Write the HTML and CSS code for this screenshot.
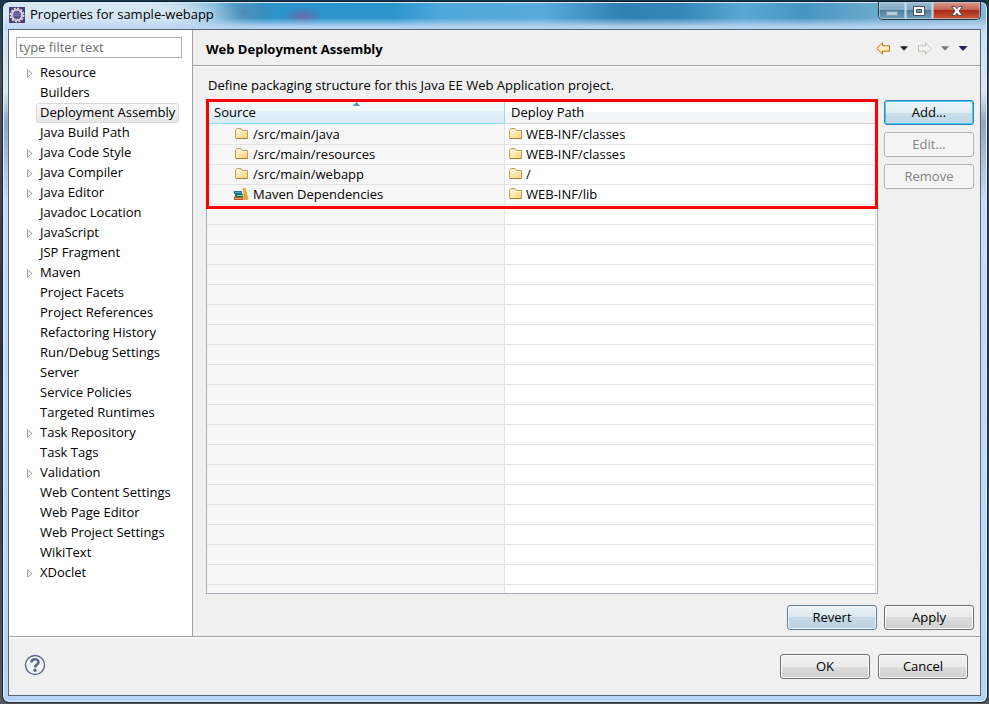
FILE: index.html
```html
<!DOCTYPE html>
<html lang="en">
<head>
<meta charset="utf-8">
<title>Properties for sample-webapp</title>
<link rel="stylesheet" href="styles.css">
</head>
<body>
<svg class="defs" aria-hidden="true">
  <defs>
    <linearGradient id="folderFill" x1="0" y1="0" x2="1" y2="1">
      <stop offset="0" stop-color="#fffbe8"/>
      <stop offset="1" stop-color="#fbd272"/>
    </linearGradient>
    <linearGradient id="backFill" x1="0" y1="0" x2="0" y2="1">
      <stop offset="0" stop-color="#fffef4"/>
      <stop offset="1" stop-color="#fbdf83"/>
    </linearGradient>
    <symbol id="folder" viewBox="0 0 14 12">
      <path d="M.5 10V2.500L2 .5h4l1.500 2h5v8H1z" fill="url(#folderFill)" stroke="#c89a50"/>
      <path d="M1.500 3.500h10.500" stroke="#fff7d6"/>
      <path d="M1 10.500h11.500" stroke="#b07a34"/>
    </symbol>
    <symbol id="books" viewBox="0 0 16 13">
      <path d="M1 3h8v3H1z" fill="#1e78a0"/>
      <path d="M2 4h6v1H2z" fill="#4fa7c5"/>
      <path d="M2 6h8v3H2z" fill="#14795c"/>
      <path d="M4 7h6v1H4z" fill="#8fd0a8"/>
      <path d="M1 9h9v3H1z" fill="#b4552c"/>
      <path d="M2 10h7v1H2z" fill="#e29b70"/>
      <path d="M10 1l2-1 3 11-2 1z" fill="#f1b52b" stroke="#c9861a" stroke-width=".6"/>
      <path d="M10.500 5v7h1.500V7z" fill="#d99221"/>
    </symbol>
    <symbol id="twisty" viewBox="0 0 6 9">
      <path d="M.5.8v7.400L5 4.500z" fill="#fff" stroke="#a0a0a0"/>
    </symbol>
    <symbol id="arrow" viewBox="0 0 15 13">
      <path d="M.8 6.500L6.500.8v3h7v5.400h-7v3z"/>
    </symbol>
    <symbol id="caret" viewBox="0 0 9 5">
      <path d="M0 0h9L5 4.500H4z"/>
    </symbol>
  </defs>
</svg>
<div class="window">
  <header class="titlebar">
    <svg class="app-icon" viewBox="0 0 16 16" aria-hidden="true">
      <path d="M0 0h16v16H0z" fill="#4a3d78"/>
      <circle cx="8" cy="8" r="6.600" fill="none" stroke="#e8e4dc" stroke-width="1.600" stroke-dasharray="2 1.450"/>
      <circle cx="8" cy="8" r="5.200" fill="#5d5492" stroke="#dcd8d6" stroke-width="1.800"/>
      <path d="M4.500 6.500h7M4 8.500h8" stroke="#7d79b0"/>
    </svg>
    <h1 class="title">Properties for sample-webapp</h1>
    <div class="window-controls">
      <button class="ctl ctl-min" type="button" aria-label="Minimize"><svg viewBox="0 0 12 5"><path d="M.5.500h11v4H.5z" fill="#b9ccda" stroke="#8196a8"/></svg></button>
      <button class="ctl ctl-max" type="button" aria-label="Maximize"><svg viewBox="0 0 12 10"><path d="M.5.500h11v9H.5z" fill="#fff" stroke="#4b5265"/><path d="M3.500 3.500h5v3h-5z" fill="#6c93b0" stroke="#4b5265"/></svg></button>
      <button class="ctl ctl-close" type="button" aria-label="Close"><svg viewBox="0 0 12 10"><path d="M.5.500h3.700L6 2.700 7.800.500h3.700L8 5l3.500 4.500H7.800L6 7.300 4.200 9.500H.5L4 5z" fill="#fff" stroke="#594950"/></svg></button>
    </div>
  </header>

  <div class="dialog">
    <div class="upper">
      <nav class="sidebar" aria-label="Property pages">
        <input class="filter" type="text" placeholder="type filter text" aria-label="type filter text">
        <ul class="tree">
          <li><svg><use href="#twisty"/></svg><a href="#">Resource</a></li>
          <li><a href="#">Builders</a></li>
          <li><a href="#" class="selected" aria-current="page">Deployment Assembly</a></li>
          <li><a href="#">Java Build Path</a></li>
          <li><svg><use href="#twisty"/></svg><a href="#">Java Code Style</a></li>
          <li><svg><use href="#twisty"/></svg><a href="#">Java Compiler</a></li>
          <li><svg><use href="#twisty"/></svg><a href="#">Java Editor</a></li>
          <li><a href="#">Javadoc Location</a></li>
          <li><svg><use href="#twisty"/></svg><a href="#">JavaScript</a></li>
          <li><a href="#">JSP Fragment</a></li>
          <li><svg><use href="#twisty"/></svg><a href="#">Maven</a></li>
          <li><a href="#">Project Facets</a></li>
          <li><a href="#">Project References</a></li>
          <li><a href="#">Refactoring History</a></li>
          <li><a href="#">Run/Debug Settings</a></li>
          <li><a href="#">Server</a></li>
          <li><a href="#">Service Policies</a></li>
          <li><a href="#">Targeted Runtimes</a></li>
          <li><svg><use href="#twisty"/></svg><a href="#">Task Repository</a></li>
          <li><a href="#">Task Tags</a></li>
          <li><svg><use href="#twisty"/></svg><a href="#">Validation</a></li>
          <li><a href="#">Web Content Settings</a></li>
          <li><a href="#">Web Page Editor</a></li>
          <li><a href="#">Web Project Settings</a></li>
          <li><a href="#">WikiText</a></li>
          <li><svg><use href="#twisty"/></svg><a href="#">XDoclet</a></li>
        </ul>
      </nav>

      <main class="page">
        <div class="page-header">
          <h2>Web Deployment Assembly</h2>
          <div class="history">
            <button type="button" class="nav-back" aria-label="Back"><svg class="arrow"><use href="#arrow"/></svg></button>
            <button type="button" class="menu-black" aria-label="Back history"><svg class="caret"><use href="#caret"/></svg></button>
            <button type="button" class="nav-forward" aria-label="Forward" disabled><svg class="arrow"><use href="#arrow"/></svg></button>
            <button type="button" class="menu-gray" aria-label="Forward history" disabled><svg class="caret"><use href="#caret"/></svg></button>
            <button type="button" class="menu-view" aria-label="Menu"><svg class="caret"><use href="#caret"/></svg></button>
          </div>
        </div>

        <div class="page-body">
          <p class="description">Define packaging structure for this Java EE Web Application project.</p>
          <div class="assembly">
            <div class="grid">
              <table>
                <thead>
                  <tr>
                    <th class="source sorted" scope="col">Source<svg class="sort" viewBox="0 0 7 4" aria-hidden="true"><path d="M0 4l3.500-4L7 4z" fill="#4c93b5"/></svg></th>
                    <th scope="col">Deploy Path</th>
                  </tr>
                </thead>
                <tbody>
                  <tr><td class="source"><svg class="folder"><use href="#folder"/></svg>/src/main/java</td><td><svg class="folder"><use href="#folder"/></svg>WEB-INF/classes</td></tr>
                  <tr><td class="source"><svg class="folder"><use href="#folder"/></svg>/src/main/resources</td><td><svg class="folder"><use href="#folder"/></svg>WEB-INF/classes</td></tr>
                  <tr><td class="source"><svg class="folder"><use href="#folder"/></svg>/src/main/webapp</td><td><svg class="folder"><use href="#folder"/></svg>/</td></tr>
                  <tr><td class="source"><svg class="books"><use href="#books"/></svg>Maven Dependencies</td><td><svg class="folder"><use href="#folder"/></svg>WEB-INF/lib</td></tr>
                </tbody>
              </table>
              <div class="highlight"></div>
            </div>
            <div class="side-actions">
              <button type="button" class="btn btn-default">Add...</button>
              <button type="button" class="btn" disabled>Edit...</button>
              <button type="button" class="btn" disabled>Remove</button>
            </div>
          </div>
          <div class="page-actions">
            <button type="button" class="btn btn-hot">Revert</button>
            <button type="button" class="btn">Apply</button>
          </div>
        </div>
      </main>
    </div>

    <footer class="footer">
      <button type="button" class="help" aria-label="Help">
        <svg viewBox="0 0 22 22"><circle cx="11" cy="11" r="9.500" fill="#f4f6f9" stroke="#5b6c8e" stroke-width="1.400"/><path d="M7.500 8.500C7.500 4.300 14.500 4.300 14.500 8.200c0 2.400-3.500 2.500-3.500 5.200" fill="none" stroke="#5b6c8e" stroke-width="2.600"/><circle cx="11" cy="16.300" r="1.700" fill="#5b6c8e"/></svg>
      </button>
      <div class="footer-actions">
        <button type="button" class="btn">OK</button>
        <button type="button" class="btn">Cancel</button>
      </div>
    </footer>
  </div>
</div>
</body>
</html>
```

FILE: styles.css
```css
* {
  box-sizing: border-box;
}

body {
  margin: 0;
  padding: 1px 1px 1px 2px;
  height: 100vh;
  background: linear-gradient(#17384a, #4a5058 12%, #30343a 50%, #55585d);
  font: 13px/20px "Open Sans", "Noto Sans", sans-serif;
  color: #000;
}

button,
input {
  font: inherit;
}

button {
  padding: 0;
  border: 0;
  background: none;
}

svg {
  display: block;
  flex: none;
}

.defs {
  position: absolute;
  width: 0;
  height: 0;
}

/* Window frame */
.window {
  display: flex;
  flex-direction: column;
  height: 100%;
  padding: 0 6px 6px 5px;
  border: 1px solid #1d2a38;
  border-top-color: #0c1b30;
  border-radius: 7px;
  background:
    linear-gradient(transparent 16px, rgba(190, 215, 243, .85) 24px, #bcd7f5 28px) 0 0 / 100% 28px no-repeat,
    radial-gradient(ellipse 150px 30px at 90px 14px, rgba(225, 238, 248, .8) 55%, transparent) no-repeat,
    radial-gradient(ellipse 20px 9px at 300px 14px, rgba(120, 95, 160, .8), transparent) no-repeat,
    radial-gradient(ellipse 34px 14px at 242px 10px, rgba(80, 135, 170, .8), transparent) no-repeat,
    linear-gradient(90deg, #b6d3ea 0, #9cc6e3 180px, #2c93cb 260px, #2c95ce 390px, #50a8da 440px, #57aadb 540px, #3080b4 620px, #3687bb 680px, #5aa7d3 740px, #4795c3 800px, #6aa9cc 870px, #86b9d6 100%) 0 0 / 100% 28px no-repeat,
    linear-gradient(#c5dbf1 0, #dbe8f4 90px, #8fa9c0 120px, #c6ddf5 200px, #b9d8f8 560px, #b5d3f3 100%);
  box-shadow: inset 0 0 0 1px #dcedfa;
}

.titlebar {
  display: flex;
  align-items: flex-start;
  height: 27px;
}

.app-icon {
  width: 16px;
  height: 16px;
  margin: 5px 5px 0 1px;
}

.title {
  flex: 1;
  margin: 2px 0 0;
  font-size: 13px;
  font-weight: 400;
}

.window-controls {
  display: flex;
  border: 1px solid #26384a;
  border-top: 0;
  border-radius: 0 0 5px 5px;
  overflow: hidden;
}

.ctl {
  display: grid;
  place-items: center;
  width: 27px;
  height: 17px;
  border-right: 1px solid #c3dcea;
  background: linear-gradient(#9cbdd1, #84aac3 45%, #4c7c9d 50%, #75a5c0);
  box-shadow: inset 0 0 0 1px rgba(210, 230, 242, .5);
}

.ctl svg {
  width: 12px;
  height: 10px;
}

.ctl-min svg {
  height: 5px;
  margin-top: 6px;
}

.ctl-close {
  width: 47px;
  border-right: 0;
  background: linear-gradient(#d89a8f, #c76353 45%, #a92a18 50%, #cc5c3c);
}

.dialog {
  flex: 1;
  display: flex;
  flex-direction: column;
  min-height: 0;
  border: 1px solid #586674;
  background: #f0f0f0;
}

.upper {
  flex: 1;
  display: flex;
  min-height: 0;
  border-bottom: 1px solid #a0a0a0;
}

/* Page tree */
.sidebar {
  flex: none;
  width: 184px;
  padding: 7px 10px 0 7px;
  border-right: 1px solid #a0a0a0;
  background: #fff;
}

.filter {
  display: block;
  width: 100%;
  height: 21px;
  padding: 0 2px 2px;
  border: 1px solid #abadb3;
  border-radius: 0;
  background: #fff;
}

.filter::placeholder {
  color: #6d6d6d;
  opacity: 1;
}

.tree {
  margin: 5px 0 0;
  padding: 0;
  list-style: none;
}

.tree li {
  display: flex;
  justify-content: flex-end;
  align-items: center;
  height: 20px;
}

.tree svg {
  width: 6px;
  height: 9px;
  margin-right: 3px;
}

.tree a {
  flex: 0 0 146px;
  padding: 0 3px 2px;
  border: 1px solid transparent;
  line-height: 16px;
  white-space: nowrap;
  color: inherit;
  text-decoration: none;
}

.tree .selected {
  flex-basis: auto;
  margin-right: auto;
  margin-left: 20px;
  border-color: #d9d9d9;
  border-radius: 3px;
  background: linear-gradient(#fafafa, #e6e6e6);
}

/* Property page */
.page {
  flex: 1;
  display: flex;
  flex-direction: column;
  min-width: 0;
}

.page-header {
  display: flex;
  align-items: center;
  justify-content: space-between;
  height: 36px;
  padding: 2px 12px 0 13px;
  border-bottom: 1px solid #a0a0a0;
  box-shadow: 0 1px #fff;
}

.page-header h2 {
  margin: 0;
  font-size: 13px;
  font-weight: 700;
}

.history {
  display: flex;
  align-items: center;
  gap: 9px;
}

.arrow {
  width: 15px;
  height: 13px;
}

.caret {
  width: 8px;
  height: 5px;
}

.nav-back {
  fill: url(#backFill);
  stroke: #b8780f;
}

.nav-forward {
  fill: #f4f4f0;
  stroke: #bdbdb8;
}

.nav-forward .arrow {
  transform: scaleX(-1);
}

.menu-black {
  fill: #222;
}

.menu-gray {
  fill: #777;
}

.menu-view {
  fill: #24206a;
}

.menu-view .caret {
  width: 10px;
}

.page-body {
  flex: 1;
  display: flex;
  flex-direction: column;
  min-height: 0;
  padding: 9px 6px 6px 13px;
}

.description {
  margin: 0 0 5px 2px;
}

.assembly {
  flex: 1;
  display: flex;
  gap: 6px;
  min-height: 0;
}

.grid {
  position: relative;
  flex: 1;
  padding-right: 2px;
  border: 1px solid #a5acb5;
  background:
    linear-gradient(#fff, #fff) right 0 top 0 / 1px 100% no-repeat,
    linear-gradient(#e3e3e3, #e3e3e3) right 1px top 0 / 1px 100% no-repeat,
    repeating-linear-gradient(transparent 0 19px, #e3e3e3 19px 20px) 0 24px / 100% 460px no-repeat,
    linear-gradient(#e3e3e3, #e3e3e3) 297px 0 / 1px 100% no-repeat,
    linear-gradient(#f7f7f7, #f7f7f7) 0 0 / 297px 100% no-repeat,
    #fff;
}

.grid table {
  width: 100%;
  table-layout: fixed;
  border-collapse: separate;
  border-spacing: 0;
}

.grid th,
.grid td {
  position: relative;
  height: 20px;
  padding: 0 4px 2px;
  line-height: 18px;
  font-weight: 400;
  text-align: left;
  white-space: nowrap;
}

.grid th {
  height: 23px;
  padding: 0 6px;
  border-bottom: 1px solid #d5d5d5;
  background: linear-gradient(#fff 50%, #f3f4f6 50%);
}

.grid .source {
  width: 298px;
  padding-left: 26px;
}

.grid thead .source {
  padding-left: 7px;
  border-right: 1px solid #96d9f9;
  border-bottom-color: #96d9f9;
  background: linear-gradient(#f2f9fc 45%, #e1f1f9 45%, #d8ecf6);
}

.grid tbody::before {
  content: "";
  display: block;
  height: 1px;
}

.sort {
  position: absolute;
  top: 1px;
  left: 49%;
  width: 7px;
  height: 4px;
}

.grid td svg {
  display: inline-block;
  width: 14px;
  height: 12px;
  margin: 0 3px 3px 0;
  vertical-align: middle;
}

.grid td.source svg {
  margin: 0 4px 3px 2px;
}

.grid td.source .books {
  width: 16px;
  height: 13px;
  margin: 0 4px 2px 0;
}

.highlight {
  position: absolute;
  top: -2px;
  left: -1px;
  right: -1px;
  height: 110px;
  border: 3px solid #f00;
}

.side-actions {
  display: flex;
  flex-direction: column;
  gap: 7px;
}

.page-actions {
  display: flex;
  justify-content: flex-end;
  gap: 7px;
  margin-top: 11px;
}

.btn {
  width: 90px;
  height: 25px;
  padding-bottom: 2px;
  border: 1px solid #707070;
  border-radius: 3px;
  background: linear-gradient(#f2f2f2, #ebebeb 50%, #dddddd 50%, #cfcfcf);
  box-shadow: inset 0 0 0 1px #fafafa;
}

.btn:disabled {
  border-color: #adb2b5;
  background: #f4f4f4;
  color: #838383;
}

.btn-default {
  border-color: #3c7fb1;
  background: linear-gradient(#edf5f9, #dfedf4 50%, #c9e0eb 50%, #bdd7e4);
  box-shadow: inset 0 0 0 1px #42cff5;
}

.btn-hot {
  border-color: #5d7f97;
  background: linear-gradient(#eaf3f7, #dce9ef 50%, #c5dae5 50%, #bcd2df);
  box-shadow: inset 0 0 0 1px #eef6fa;
}

/* Dialog footer */
.footer {
  display: flex;
  align-items: center;
  justify-content: space-between;
  height: 58px;
  padding: 0 12px 0 15px;
  border-top: 1px solid #fff;
}

.help {
  padding-bottom: 3px;
}

.help svg {
  width: 22px;
  height: 22px;
}

.footer-actions {
  display: flex;
  gap: 8px;
}
```
